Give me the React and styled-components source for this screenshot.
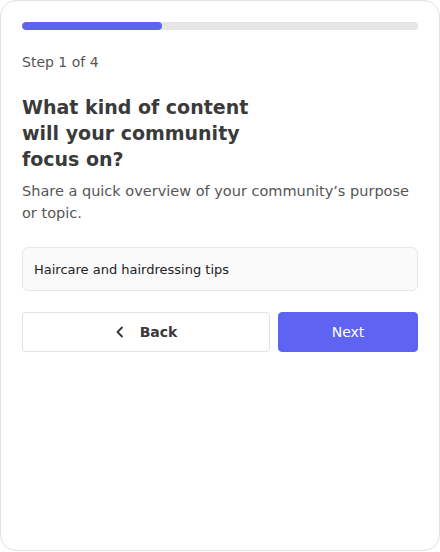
import React from 'react';
import styled, { createGlobalStyle } from 'styled-components';

const GlobalStyle = createGlobalStyle`
  html, body {
    margin: 0;
    padding: 0;
    background: #ffffff;
  }
  body {
    font-family: "DejaVu Sans", "Open Sans", sans-serif;
    color: #333;
  }
  * { box-sizing: border-box; }
`

const Card = styled.section`
  width: 440px;
  height: 551px;
  border: 1px solid #e2e2e2;
  border-radius: 16px;
  padding: 21px 21px;
  display: flex;
  flex-direction: column;
`

const Track = styled.div`
  height: 8px;
  border-radius: 4px;
  background: #e6e6e6;
  overflow: hidden;
`

const Fill = styled.div`
  height: 100%;
  border-radius: 4px;
  background: #5f63f2;
`

const StepLabel = styled.p`
  margin: 22px 0 0;
  font-size: 14px;
  line-height: 20px;
  color: #555;
`

const Title = styled.h1`
  margin: 22px 0 0;
  max-width: 250px;
  font-size: 19px;
  line-height: 26px;
  font-weight: 700;
  color: #3a3a3a;
`

const Subtitle = styled.p`
  margin: 8px 0 0;
  font-size: 14.5px;
  line-height: 22px;
  color: #555;
`

const TextInput = styled.input`
  margin-top: 23px;
  height: 44px;
  width: 100%;
  padding: 0 11px;
  border: 1px solid #e6e6e6;
  border-radius: 6px;
  background: #fafafa;
  font: inherit;
  font-size: 13px;
  color: #222;
  outline: none;
`

const Actions = styled.div`
  margin-top: 21px;
  display: grid;
  grid-template-columns: 248px 1fr;
  gap: 8px;
`

const Button = styled.button`
  height: 40px;
  display: flex;
  align-items: center;
  justify-content: center;
  gap: 15px;
  border-radius: 4px;
  font: inherit;
  font-size: 14px;
  font-weight: ${({ $primary }) => $primary ? 500 : 600};
  color: ${({ $primary }) => $primary ? '#ffffff' : '#3a3a3a'};
  background: ${({ $primary }) => $primary ? '#5f63f2' : '#ffffff'};
  border: 1px solid ${({ $primary }) => $primary ? '#5f63f2' : '#e2e2e2'};
  cursor: pointer;
`

const Chevron = () => (
  <svg width="10" height="12" viewBox="0 0 10 12" fill="none">
    <path d="M7 1.5L2.5 6L7 10.5" stroke="#333" strokeWidth="1.8" strokeLinecap="round" strokeLinejoin="round" />
  </svg>
)

export default function App() {
  const step = 1
  const total = 4
  return (
    <>
      <GlobalStyle />
      <Card>
        <Track>
          <Fill style={{ width: `${(140 / 396) * 100}%` }} />
        </Track>
        <StepLabel>Step {step} of {total}</StepLabel>
        <Title>What kind of content will your community focus on?</Title>
        <Subtitle>Share a quick overview of your community’s purpose or topic.</Subtitle>
        <TextInput defaultValue="Haircare and hairdressing tips" />
        <Actions>
          <Button>
            <Chevron />
            Back
          </Button>
          <Button $primary>Next</Button>
        </Actions>
      </Card>
    </>
  )
}
